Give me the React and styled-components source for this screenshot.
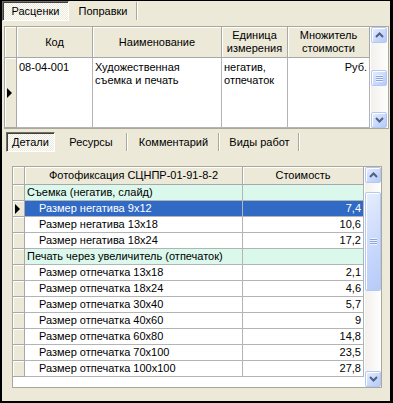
import React from 'react'
import styled, { createGlobalStyle, css } from 'styled-components'

const GlobalStyle = createGlobalStyle`
	html, body {
		margin: 0;
		padding: 0;
		background: #000;
	}
	body {
		font-family: 'Liberation Sans', Arial, sans-serif;
		font-size: 11px;
		color: #000;
	}
`

const Window = styled.div`
	width: 393px;
	height: 403px;
	box-sizing: border-box;
	border-style: solid;
	border-color: #000;
	border-width: 1px 3px 2px 2px;
	background: #ece9d8;
	display: flex;
	flex-direction: column;
`

const TabBar = styled.div`
	display: flex;
	align-items: center;
	height: 20px;
	padding-left: ${(p) => p.$indent || 0}px;
	margin-top: ${(p) => p.$top || 0}px;
`

const dither = css`
	background-color: #ece9d8;
	background-image: conic-gradient(#fff 25%, #ece9d8 0 50%, #fff 0 75%, #ece9d8 0);
	background-size: 2px 2px;
`

const Tab = styled.div`
	box-sizing: border-box;
	height: 20px;
	width: ${(p) => p.$w}px;
	display: flex;
	align-items: center;
	justify-content: center;
	white-space: nowrap;
	${(p) =>
		p.$active
			? css`
					${dither};
					border-style: solid;
					border-width: 1px;
					border-color: #716f64 #fff #fff #716f64;
					box-shadow: inset 1px 1px 0 #404040;
				`
			: css`
					border-right: 1px solid #fff;
					box-shadow: inset -1px 0 0 #aca899;
					height: 18px;
				`}
`

const Spacer = styled.div`
	width: ${(p) => p.$w}px;
`

const GridBox = styled.div`
	display: flex;
	box-sizing: border-box;
	background: #fff;
	border: 1px solid #aca899;
	margin: ${(p) => p.$margin};
	height: ${(p) => p.$h}px;
`

const Table = styled.table`
	border-collapse: separate;
	border-spacing: 0;
	table-layout: fixed;
	width: ${(p) => p.$w}px;
	align-self: flex-start;
	font-size: 11px;
`

const HeadCell = styled.th`
	box-sizing: border-box;
	background: #ece9d8;
	font-weight: normal;
	text-align: center;
	padding: 0 2px;
	height: ${(p) => p.$h}px;
	line-height: 13px;
	border-right: 1px solid #a8a8a8;
	border-bottom: 1px solid #a8a8a8;
	box-shadow: inset 1px 1px 0 #fff;
`

const Indicator = styled.td`
	box-sizing: border-box;
	background: #ece9d8;
	border-right: 1px solid #a8a8a8;
	border-bottom: 1px solid #a8a8a8;
	box-shadow: inset 1px 1px 0 #fff;
	padding: 0;
	vertical-align: middle;
	height: ${(p) => p.$h}px;
`

const Arrow = styled.div`
	width: 0;
	height: 0;
	margin-left: 2px;
	border-top: 5px solid transparent;
	border-bottom: 5px solid transparent;
	border-left: 5px solid #000;
`

const Cell = styled.td`
	box-sizing: border-box;
	padding: ${(p) => (p.$top ? '3px 2px 0 2px' : '0 2px')};
	vertical-align: ${(p) => (p.$top ? 'top' : 'middle')};
	text-align: ${(p) => (p.$right ? 'right' : 'left')};
	padding-left: ${(p) => (p.$indent ? 14 : 2)}px;
	line-height: 13px;
	white-space: ${(p) => (p.$wrap ? 'normal' : 'nowrap')};
	overflow: hidden;
	border-right: 1px solid #b4b4b4;
	border-bottom: 1px solid #b4b4b4;
	background: ${(p) => (p.$selected ? '#316ac5' : p.$group ? '#dbf8ec' : '#fff')};
	color: ${(p) => (p.$selected ? '#fff' : '#000')};
`

const ScrollBar = styled.div`
	width: 17px;
	margin-left: auto;
	display: flex;
	flex-direction: column;
	background: linear-gradient(to right, #f3f1ec, #fefefe);
	border-left: 1px solid #fff;
`

const SbButton = styled.div`
	box-sizing: border-box;
	width: 16px;
	height: ${(p) => p.$h || 16}px;
	margin-top: ${(p) => p.$mt || 0}px;
	border: 1px solid #b4c8f6;
	border-radius: 2px;
	background: linear-gradient(135deg, #e6eefc 0%, #c9d8fc 55%, #b6cbf7 100%);
	box-shadow: inset 1px 1px 0 #fff;
	display: flex;
	align-items: center;
	justify-content: center;
`

const Grip = styled.div`
	width: 7px;
	height: 7px;
	background: repeating-linear-gradient(#eef3fe 0 1px, #8ca4dc 1px 2px);
`

const Fill = styled.div`
	flex: 1;
`

const DetailPanel = styled.div`
	flex: 1;
	display: flex;
	flex-direction: column;
`

const Chevron = ({ up }) => (
	<svg width="9" height="6" viewBox="0 0 9 6">
		<path
			d={up ? 'M1 5 L4.5 1.5 L8 5' : 'M1 1 L4.5 4.5 L8 1'}
			fill="none"
			stroke="#4d6185"
			strokeWidth="2"
		/>
	</svg>
)

const detailRows = [
	{ name: 'Съемка (негатив, слайд)', group: true },
	{ name: 'Размер негатива 9x12', value: '7,4', selected: true },
	{ name: 'Размер негатива 13x18', value: '10,6' },
	{ name: 'Размер негатива 18x24', value: '17,2' },
	{ name: 'Печать через увеличитель (отпечаток)', group: true },
	{ name: 'Размер отпечатка 13x18', value: '2,1' },
	{ name: 'Размер отпечатка 18x24', value: '4,6' },
	{ name: 'Размер отпечатка 30x40', value: '5,7' },
	{ name: 'Размер отпечатка 40x60', value: '9' },
	{ name: 'Размер отпечатка 60x80', value: '14,8' },
	{ name: 'Размер отпечатка 70x100', value: '23,5' },
	{ name: 'Размер отпечатка 100x100', value: '27,8' },
]

export default function App() {
	return (
		<>
			<GlobalStyle />
			<Window>
				<TabBar>
					<Tab $active $w={67}>Расценки</Tab>
					<Tab $w={69}>Поправки</Tab>
				</TabBar>
				<GridBox $margin="5px 1px 0 2px" $h={103}>
					<Table $w={365}>
						<colgroup>
							<col width="12" />
							<col width="76" />
							<col width="129" />
							<col width="66" />
							<col width="82" />
						</colgroup>
						<thead>
							<tr>
								<HeadCell $h={31} />
								<HeadCell>Код</HeadCell>
								<HeadCell>Наименование</HeadCell>
								<HeadCell>Единица измерения</HeadCell>
								<HeadCell>Множитель стоимости</HeadCell>
							</tr>
						</thead>
						<tbody>
							<tr>
								<Indicator $h={70}>
									<Arrow />
								</Indicator>
								<Cell $top>08-04-001</Cell>
								<Cell $top $wrap>
									Художественная съемка и печать
								</Cell>
								<Cell $top $wrap>
									негатив, отпечаток
								</Cell>
								<Cell $top $right>
									Руб.
								</Cell>
							</tr>
						</tbody>
					</Table>
					<ScrollBar>
						<SbButton>
							<Chevron up />
						</SbButton>
						<SbButton $mt={27} $h={16}>
							<Grip />
						</SbButton>
						<Fill />
						<SbButton>
							<Chevron />
						</SbButton>
					</ScrollBar>
				</GridBox>
				<TabBar $indent={4} $top={3}>
					<Tab $active $w={49}>Детали</Tab>
					<Tab $w={73}>Ресурсы</Tab>
					<Tab $w={92}>Комментарий</Tab>
					<Tab $w={80}>Виды работ</Tab>
					<Spacer $w={2} />
				</TabBar>
				<DetailPanel>
					<GridBox $margin="14px 8px 0 10px" $h={222}>
						<Table $w={351}>
							<colgroup>
								<col width="12" />
								<col width="218" />
								<col width="121" />
							</colgroup>
							<thead>
								<tr>
									<HeadCell $h={18} />
									<HeadCell>Фотофиксация СЦНПР-01-91-8-2</HeadCell>
									<HeadCell>Стоимость</HeadCell>
								</tr>
							</thead>
							<tbody>
								{detailRows.map((r) => (
									<tr key={r.name}>
										<Indicator $h={16}>{r.selected && <Arrow />}</Indicator>
										<Cell $group={r.group} $selected={r.selected} $indent={!r.group}>
											{r.name}
										</Cell>
										<Cell $group={r.group} $selected={r.selected} $right>
											{r.value}
										</Cell>
									</tr>
								))}
							</tbody>
						</Table>
						<ScrollBar>
							<SbButton>
								<Chevron up />
							</SbButton>
							<SbButton $mt={9} $h={99}>
								<Grip />
							</SbButton>
							<Fill />
							<SbButton>
								<Chevron />
							</SbButton>
						</ScrollBar>
					</GridBox>
				</DetailPanel>
			</Window>
		</>
	)
}
